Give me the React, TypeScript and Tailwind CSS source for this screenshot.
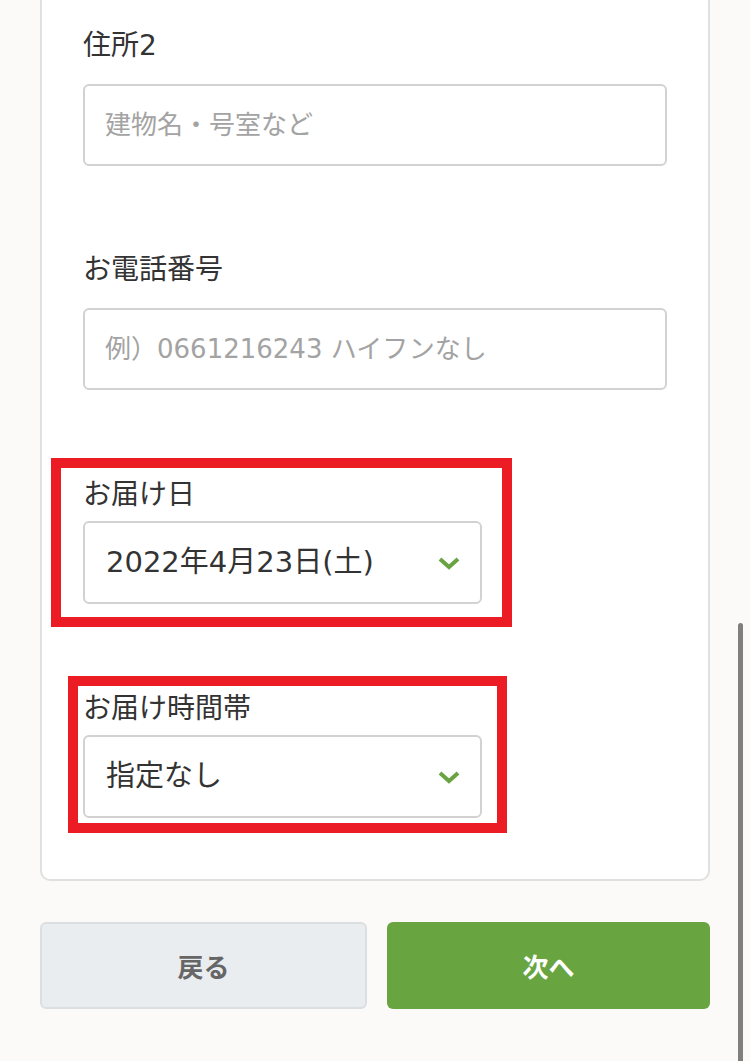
const font = { fontFamily: '"DejaVu Sans", "Noto Sans CJK JP", "Noto Sans", sans-serif' };
const btnFont = { fontFamily: '"Noto Sans CJK JP", "Noto Sans", sans-serif' };

function Chevron() {
  return (
    <svg width="22" height="14" viewBox="0 0 22 14" className="shrink-0">
      <polyline
        points="2,3 11,11 20,3"
        fill="none"
        stroke="#6aa341"
        strokeWidth="4"
        strokeLinejoin="miter"
      />
    </svg>
  );
}

function TextField({ label, placeholder }: { label: string; placeholder: string }) {
  return (
    <div className="flex flex-col gap-5">
      <label className="text-[28px] leading-[36px] text-[#333]">{label}</label>
      <input
        placeholder={placeholder}
        className="h-[82px] w-full rounded-md border-2 border-[#d2d2d2] bg-white px-5 text-[26px] text-[#333] outline-none placeholder:text-[#a3a3a3]"
        style={font}
      />
    </div>
  );
}

function SelectBox({ value }: { value: string }) {
  return (
    <div className="flex h-[83px] w-[399px] items-center justify-between rounded-md border-2 border-[#d2d2d2] bg-white pl-[21px] pr-[20px]">
      <span className="text-[29px] text-[#333]">{value}</span>
      <Chevron />
    </div>
  );
}

export default function App() {
  return (
    <div className="relative min-h-[1061px] w-full overflow-hidden bg-[#fbfaf8]" style={font}>
      <div className="mx-10 rounded-b-[10px] border-x-2 border-b-2 border-[#e0e0e0] bg-white px-[41px] pt-[28px] pb-[46px]">
        <TextField label="住所2" placeholder="建物名・号室など" />
        <div className="mt-[86px]">
          <TextField label="お電話番号" placeholder="例）0661216243 ハイフンなし" />
        </div>

        <div className="mt-[68px] -ml-[32px] w-[461px] border-[10px] border-[#ec1c24] bg-white pt-[9px] pb-[13px] pl-[22px]">
          <div className="text-[28px] leading-[36px] text-[#333]">お届け日</div>
          <div className="mt-2">
            <SelectBox value="2022年4月23日(土)" />
          </div>
        </div>

        <div className="mt-[49px] -ml-[15px] w-[439px] border-[10px] border-[#ec1c24] bg-white pt-[5px] pb-[5px] pl-[5px]">
          <div className="text-[28px] leading-[36px] text-[#333]">お届け時間帯</div>
          <div className="mt-2">
            <SelectBox value="指定なし" />
          </div>
        </div>
      </div>

      <div className="mx-10 mt-[41px] flex gap-5" style={btnFont}>
        <button className="flex h-[87px] flex-1 items-center justify-center rounded-md border-2 border-[#dcdfe2] bg-[#eaedf0] text-[26px] font-bold text-[#666]">
          戻る
        </button>
        <button className="flex h-[87px] flex-1 items-center justify-center rounded-md bg-[#68a541] text-[26px] font-bold text-white">
          次へ
        </button>
      </div>

      <div className="absolute top-[623px] right-[7px] bottom-0 w-[5px] rounded-t-full bg-[#7f7f7f]" />
    </div>
  );
}
